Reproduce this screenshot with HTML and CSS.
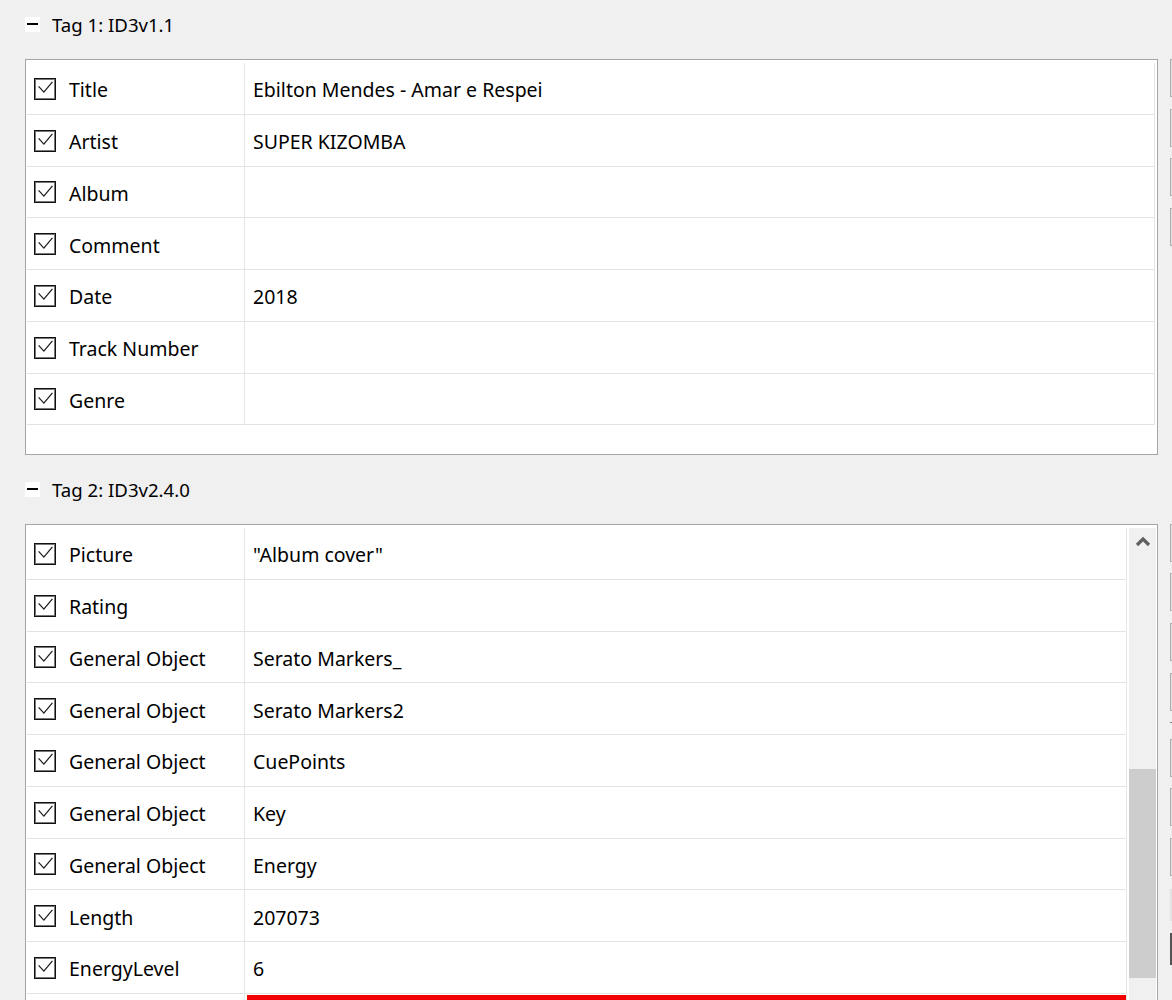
FILE: index.html
```html
<!DOCTYPE html>
<html>
<head>
<meta charset="utf-8">
<link rel="stylesheet" href="styles.css">
</head>
<body>
<div class="page">
  <div class="main">
    <section class="tag">
      <div class="tag-head"><span class="toggle"><span class="dash"></span></span><span class="tag-title">Tag 1: ID3v1.1</span></div>
      <div class="frame frame1">
        <div class="table">
          <div class="row"><div class="name"><span class="cb"><svg viewBox="0 0 21 21" width="21" height="21"><polyline points="3.8,8.3 9.3,14.3 18.3,3.5" /></svg></span><span class="label">Title</span></div><div class="value">Ebilton Mendes - Amar e Respei</div></div>
          <div class="row"><div class="name"><span class="cb"><svg viewBox="0 0 21 21" width="21" height="21"><polyline points="3.8,8.3 9.3,14.3 18.3,3.5" /></svg></span><span class="label">Artist</span></div><div class="value">SUPER KIZOMBA</div></div>
          <div class="row"><div class="name"><span class="cb"><svg viewBox="0 0 21 21" width="21" height="21"><polyline points="3.8,8.3 9.3,14.3 18.3,3.5" /></svg></span><span class="label">Album</span></div><div class="value"></div></div>
          <div class="row"><div class="name"><span class="cb"><svg viewBox="0 0 21 21" width="21" height="21"><polyline points="3.8,8.3 9.3,14.3 18.3,3.5" /></svg></span><span class="label">Comment</span></div><div class="value"></div></div>
          <div class="row"><div class="name"><span class="cb"><svg viewBox="0 0 21 21" width="21" height="21"><polyline points="3.8,8.3 9.3,14.3 18.3,3.5" /></svg></span><span class="label">Date</span></div><div class="value">2018</div></div>
          <div class="row"><div class="name"><span class="cb"><svg viewBox="0 0 21 21" width="21" height="21"><polyline points="3.8,8.3 9.3,14.3 18.3,3.5" /></svg></span><span class="label">Track Number</span></div><div class="value"></div></div>
          <div class="row"><div class="name"><span class="cb"><svg viewBox="0 0 21 21" width="21" height="21"><polyline points="3.8,8.3 9.3,14.3 18.3,3.5" /></svg></span><span class="label">Genre</span></div><div class="value"></div></div>
        </div>
      </div>
    </section>
    <section class="tag tag2">
      <div class="tag-head"><span class="toggle"><span class="dash"></span></span><span class="tag-title">Tag 2: ID3v2.4.0</span></div>
      <div class="frame frame2">
        <div class="table">
          <div class="row"><div class="name"><span class="cb"><svg viewBox="0 0 21 21" width="21" height="21"><polyline points="3.8,8.3 9.3,14.3 18.3,3.5" /></svg></span><span class="label">Picture</span></div><div class="value">"Album cover"</div></div>
          <div class="row"><div class="name"><span class="cb"><svg viewBox="0 0 21 21" width="21" height="21"><polyline points="3.8,8.3 9.3,14.3 18.3,3.5" /></svg></span><span class="label">Rating</span></div><div class="value"></div></div>
          <div class="row"><div class="name"><span class="cb"><svg viewBox="0 0 21 21" width="21" height="21"><polyline points="3.8,8.3 9.3,14.3 18.3,3.5" /></svg></span><span class="label">General Object</span></div><div class="value">Serato Markers_</div></div>
          <div class="row"><div class="name"><span class="cb"><svg viewBox="0 0 21 21" width="21" height="21"><polyline points="3.8,8.3 9.3,14.3 18.3,3.5" /></svg></span><span class="label">General Object</span></div><div class="value">Serato Markers2</div></div>
          <div class="row"><div class="name"><span class="cb"><svg viewBox="0 0 21 21" width="21" height="21"><polyline points="3.8,8.3 9.3,14.3 18.3,3.5" /></svg></span><span class="label">General Object</span></div><div class="value">CuePoints</div></div>
          <div class="row"><div class="name"><span class="cb"><svg viewBox="0 0 21 21" width="21" height="21"><polyline points="3.8,8.3 9.3,14.3 18.3,3.5" /></svg></span><span class="label">General Object</span></div><div class="value">Key</div></div>
          <div class="row"><div class="name"><span class="cb"><svg viewBox="0 0 21 21" width="21" height="21"><polyline points="3.8,8.3 9.3,14.3 18.3,3.5" /></svg></span><span class="label">General Object</span></div><div class="value">Energy</div></div>
          <div class="row"><div class="name"><span class="cb"><svg viewBox="0 0 21 21" width="21" height="21"><polyline points="3.8,8.3 9.3,14.3 18.3,3.5" /></svg></span><span class="label">Length</span></div><div class="value">207073</div></div>
          <div class="row"><div class="name"><span class="cb"><svg viewBox="0 0 21 21" width="21" height="21"><polyline points="3.8,8.3 9.3,14.3 18.3,3.5" /></svg></span><span class="label">EnergyLevel</span></div><div class="value">6</div></div>
          <div class="row row-edit"><div class="name"></div><div class="value"><div class="editor"></div></div></div>
        </div>
        <div class="scrollbar">
          <div class="sb-arrow"><svg viewBox="0 0 16 12" width="16" height="12"><polyline points="2,10 8,4 14,10" /></svg></div>
          <div class="sb-space"></div>
          <div class="sb-thumb"></div>
          <div class="sb-rest"></div>
        </div>
      </div>
    </section>
  </div>
  <div class="side">
    <div class="btn"></div>
    <div class="btn"></div>
    <div class="btn"></div>
    <div class="btn"></div>
    <div class="side-gap"></div>
    <div class="btn"></div>
    <div class="btn"></div>
    <div class="btn"></div>
    <div class="btn"></div>
    <div class="side-line"></div>
    <div class="btn"></div>
    <div class="btn"></div>
    <div class="btn"></div>
    <div class="side-faint"></div>
    <div class="side-mark"></div>
  </div>
</div>
</body>
</html>
```
FILE: styles.css
```css
html, body {
  margin: 0;
  padding: 0;
}
body {
  background: #f0f0f0;
  height: 1000px;
  overflow: hidden;
  font-family: "Noto Sans", "Open Sans", sans-serif;
  color: #000;
}
.page {
  display: flex;
  align-items: flex-start;
}
.main {
  width: 1133px;
  padding-left: 25px;
  flex: none;
}
.tag-head {
  height: 50px;
  margin-bottom: 9px;
  display: flex;
  align-items: center;
}
.tag2 {
  margin-top: 10px;
}
.toggle {
  width: 15px;
  height: 15px;
  background: #fff;
  display: flex;
  align-items: center;
  justify-content: center;
  margin-top: -1px;
}
.dash {
  width: 11px;
  height: 2px;
  background: #000;
  margin-top: -1px;
}
.tag-title {
  margin-left: 12px;
  font-size: 18.6px;
  margin-top: -2px;
}
.frame {
  box-sizing: border-box;
  border: 1px solid #a6a6a6;
  background: #fff;
  padding: 3px 2px 0 1px;
}
.frame1 {
  height: 396px;
}
.frame2 {
  height: 620px;
  display: flex;
  align-items: flex-start;
  padding-right: 1px;
}
.table {
  border-right: 1px solid #e6e6e6;
  flex: 1;
}
.row {
  box-sizing: border-box;
  height: 51.75px;
  display: grid;
  grid-template-columns: 218px 1fr;
  border-bottom: 1px solid #e3e3e3;
}
.name {
  border-right: 1px solid #e6e6e6;
  display: flex;
  align-items: center;
  padding-left: 7px;
}
.cb {
  box-sizing: border-box;
  width: 22px;
  height: 22px;
  border: 1px solid #111;
  box-shadow: inset 0 0 0 1px #777;
  display: flex;
  align-items: center;
  justify-content: center;
  flex: none;
  margin-top: 1px;
}
.cb svg {
  display: block;
}
.cb polyline {
  fill: none;
  stroke: #1a1a1a;
  stroke-width: 1.3;
}
.label {
  margin-left: 13px;
  font-size: 19.5px;
  padding-top: 3px;
}
.value {
  display: flex;
  align-items: center;
  padding-left: 8px;
  padding-top: 3px;
  font-size: 19.5px;
}
.row-edit {
  border-bottom: none;
  height: 60px;
}
.row-edit .value {
  padding: 0;
  align-items: flex-start;
}
.editor {
  box-sizing: border-box;
  margin-left: 2px;
  margin-top: 1px;
  width: 100%;
  height: 40px;
  border: 5px solid #f20000;
}
.scrollbar {
  width: 27px;
  margin-left: 2px;
  height: 616px;
  background: #f0f0f0;
  display: flex;
  flex-direction: column;
}
.sb-arrow {
  height: 28px;
  display: flex;
  align-items: center;
  justify-content: center;
}
.sb-arrow svg {
  display: block;
  margin-top: -2px;
}
.sb-arrow polyline {
  fill: none;
  stroke: #606060;
  stroke-width: 3.2;
}
.sb-space {
  height: 213px;
}
.sb-thumb {
  height: 209px;
  background: #cdcdcd;
}
.sb-rest {
  flex: 1;
}
.side {
  margin-left: 12px;
  padding-top: 59px;
  width: 80px;
  flex: none;
  display: flex;
  flex-direction: column;
}
.btn {
  box-sizing: border-box;
  height: 38px;
  margin-bottom: 11.7px;
  border: 1px solid #adadad;
  background: #e1e1e1;
}
.side-gap {
  height: 266px;
}
.side-line {
  height: 1px;
  background: #7a7a7a;
  margin-top: -1px;
  margin-bottom: 16px;
}
.side-faint {
  height: 32px;
  margin-top: 1px;
  border-left: 2px solid #e2e2e2;
}
.side-mark {
  margin-top: 12px;
  height: 32px;
  border-left: 2px solid #555;
}
```
